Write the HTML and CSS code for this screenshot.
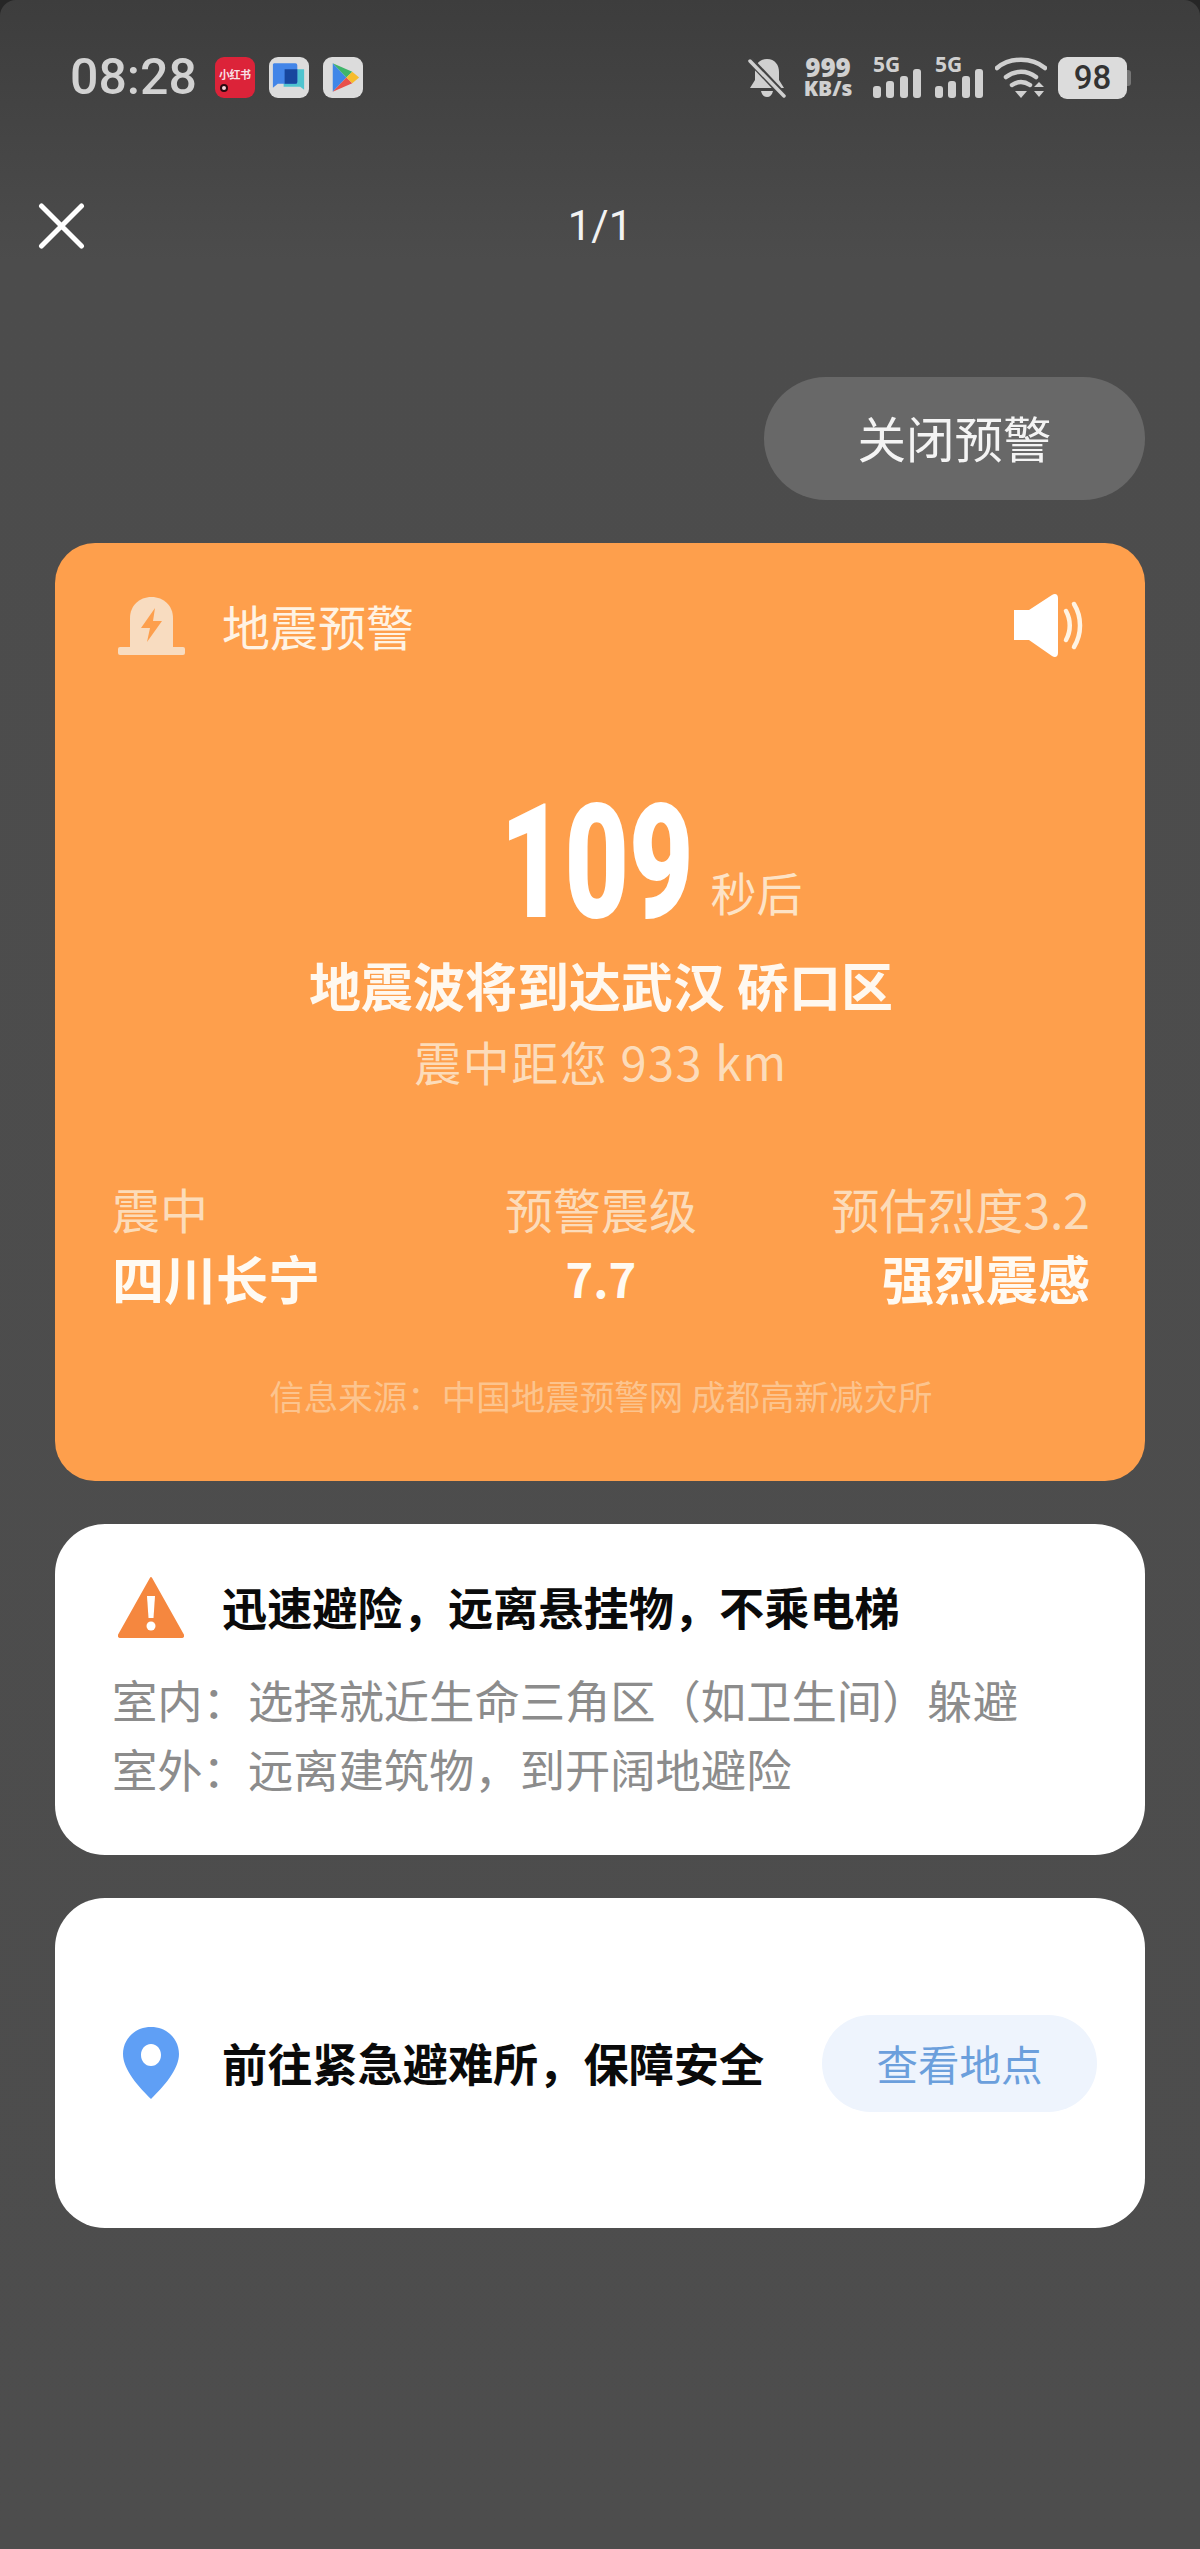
FILE: index.html
```html
<!DOCTYPE html>
<html lang="zh-CN">
<head>
<meta charset="utf-8">
<title>地震预警</title>
<link rel="stylesheet" href="styles.css">
</head>
<body>
<div class="page">
  <div class="status">
    <span class="time">08:28</span>
    <span class="tile tile-red">小红书<i class="tile-dot"></i></span>
    <span class="tile tile-light">
      <svg class="tile-svg" viewBox="0 0 41 41"><path d="M15 12h21v21l-4-3H15z" fill="#4fc4cf"/><path d="M5 6h22a2 2 0 0 1 2 2v17a2 2 0 0 1-2 2H9l-5 4V7z" fill="#4285e8"/><path d="M16 12h13v13a2 2 0 0 1-2 2H16z" fill="#17479e"/></svg>
    </span>
    <span class="tile tile-light tile-play">
      <svg class="tile-svg" viewBox="0 0 41 41"><path d="M10 6v29l14-14.500z" fill="#3f86e8"/><path d="M10 6l14 14.500 6-6z" fill="#3fb56a"/><path d="M10 35l14-14.500 6 6z" fill="#e8504a"/><path d="M24 20.500l6-6 7 6-7 6z" fill="#f7bc2d"/></svg>
    </span>
    <span class="status-right">
      <svg class="bell" viewBox="0 0 38 40"><path d="M19 1c8 0 12 6 12 13v8l5 8H2l5-8v-8C7 7 11 1 19 1zM13 33h12c-1 4-3 6-6 6s-5-2-6-6z" fill="#d0d0d0"/><path d="M2 2l34 36" stroke="#444" stroke-width="7"/><path d="M2 3l34 35" stroke="#d0d0d0" stroke-width="3.500" stroke-linecap="round"/></svg>
      <span class="speed"><b>999</b><b>KB/s</b></span>
      <span class="signal"><b>5G</b><svg class="bars" viewBox="0 0 48 29"><rect x="0" y="17" width="8" height="12" rx="3"/><rect x="13" y="12" width="8" height="17" rx="3"/><rect x="27" y="7" width="8" height="22" rx="3"/><rect x="40" y="0" width="8" height="29" rx="3"/></svg></span>
      <span class="signal"><b>5G</b><svg class="bars" viewBox="0 0 48 29"><rect x="0" y="17" width="8" height="12" rx="3"/><rect x="13" y="12" width="8" height="17" rx="3"/><rect x="27" y="7" width="8" height="22" rx="3"/><rect x="40" y="0" width="8" height="29" rx="3"/></svg></span>
      <svg class="wifi" viewBox="0 0 52 42"><g fill="none" stroke="#d0d0d0" stroke-width="4.500" stroke-linecap="round"><path d="M2 11C15 0 37 0 50 11"/><path d="M11 20c9-7 21-7 30 0"/><path d="M17 28c6-4 12-4 18 0"/></g><path d="M20 34h12l-6 7z" fill="#d0d0d0"/><path d="M39 30l5-5 5 5zM39 34h10l-5 6z" fill="#d0d0d0"/></svg>
      <span class="battery">98</span>
    </span>
  </div>

  <div class="nav">
    <svg class="close" viewBox="0 0 46 46"><path d="M3 3l40 40M43 3L3 43" stroke="#fff" stroke-width="5" stroke-linecap="round"/></svg>
    <span class="pager">1/1</span>
    <span></span>
  </div>

  <div class="action"><span class="dismiss">关闭预警</span></div>

  <section class="card card-alert">
    <div class="alert-head">
      <svg class="alarm" viewBox="0 0 67 58"><path d="M12 50V21C12 9 21 0 33.500 0S55 9 55 21v29z" fill="#f8dcc0"/><rect x="0" y="50" width="67" height="8" rx="2" fill="#f8dcc0"/><path d="M37 11L23 31h9l-3 14 15-21h-9z" fill="#fd9f4d"/></svg>
      <span class="alert-title">地震预警</span>
      <svg class="speaker" viewBox="0 0 72 65"><path d="M2 17h15L40 2c3-2 6-1 6 3v55c0 4-3 5-6 3L17 47H2z" fill="#fff"/><path d="M54 18c5 9 5 20 0 29M62 11c8 13 8 30 0 43" fill="none" stroke="#fff3e3" stroke-width="4.500" stroke-linecap="round"/></svg>
    </div>

    <div class="count">
      <span></span>
      <span class="count-box"><span class="count-num">109</span></span>
      <span class="count-unit">秒后</span>
    </div>
    <div class="headline">地震波将到达武汉 硚口区</div>
    <div class="distance">震中距您 933 km</div>

    <div class="facts">
      <div class="fact"><span class="fact-label">震中</span><span class="fact-value">四川长宁</span></div>
      <div class="fact fact-mid"><span class="fact-label">预警震级</span><span class="fact-value fact-num">7.7</span></div>
      <div class="fact fact-end"><span class="fact-label">预估烈度3.2</span><span class="fact-value">强烈震感</span></div>
    </div>
    <div class="source">信息来源：中国地震预警网 成都高新减灾所</div>
  </section>

  <section class="card card-tips">
    <div class="tips-head">
      <svg class="warn" viewBox="0 0 66 62"><path d="M33 2L65 59c.5 1 0 2-1 2H2c-1 0-1.500-1-1-2z" fill="#f5873f" stroke="#f5873f" stroke-width="2" stroke-linejoin="round"/><path d="M29 20h8l-1.500 22h-5z" fill="#fff"/><circle cx="33" cy="50" r="4.500" fill="#fff"/></svg>
      <span class="strong-text">迅速避险，远离悬挂物，不乘电梯</span>
    </div>
    <p class="tip-line">室内：选择就近生命三角区（如卫生间）躲避</p>
    <p class="tip-line">室外：远离建筑物，到开阔地避险</p>
  </section>

  <section class="card card-shelter">
    <svg class="pin" viewBox="0 0 56 72"><path fill-rule="evenodd" d="M28 0c16 0 28 12 28 27 0 16-16 33-28 45C16 60 0 43 0 27 0 12 12 0 28 0zm0 17c-6 0-10 5-10 11s4 11 10 11 10-5 10-11-4-11-10-11z" fill="#5f9ff5"/></svg>
    <span class="strong-text">前往紧急避难所，保障安全</span>
    <span class="view-btn">查看地点</span>
  </section>
</div>
</body>
</html>
```

FILE: styles.css
```css
* { box-sizing: border-box; }
html, body { margin: 0; padding: 0; background: #262626; }
body { font-family: "Noto Sans CJK SC", "Noto Sans", sans-serif; }

.page {
  width: 1200px;
  height: 2549px;
  padding: 0 55px;
  overflow: hidden;
  border-radius: 16px 16px 0 0;
  background: linear-gradient(#3d3d3d 0, #4c4c4c 260px, #4d4d4d 100%);
}

/* Status bar */
.status {
  display: flex;
  align-items: center;
  height: 41px;
  margin: 57px -55px 0;
  padding: 0 73px 0 70px;
  color: #d0d0d0;
}
.time {
  margin-right: 18px;
  font: 500 50px/41px Roboto, sans-serif;
  color: #d2d2d2;
}
.tile {
  position: relative;
  display: flex;
  align-items: center;
  justify-content: center;
  width: 40px;
  height: 41px;
  margin-right: 14px;
  border-radius: 9px;
}
.tile-red {
  padding-bottom: 7px;
  background: #dc2339;
  color: #f8dfe2;
  font-size: 11px;
  font-weight: 700;
  line-height: 12px;
  white-space: nowrap;
  letter-spacing: -.5px;
}
.tile-dot {
  position: absolute;
  left: 5px;
  bottom: 6px;
  width: 8px;
  height: 8px;
  border: 2px solid #2a0a10;
  border-radius: 50%;
  background: #f6d6da;
}
.tile-light { background: #dcdcdc; }
.tile-svg { display: block; width: 40px; height: 41px; }
.status-right {
  display: flex;
  align-items: center;
  margin-left: auto;
}
.bell { width: 38px; height: 40px; margin-right: 17px; }
.speed {
  display: flex;
  flex-direction: column;
  align-items: center;
  margin-right: 20px;
  width: 50px;
  font: 700 21px/21px "Noto Sans", sans-serif;
  color: #d0d0d0;
}
.speed b:first-child { font-size: 26px; }
.signal {
  display: flex;
  flex-direction: column;
  width: 48px;
  height: 41px;
  margin-right: 14px;
}
.signal b {
  height: 12px;
  font: 700 21px/14px "Noto Sans", sans-serif;
  color: #d0d0d0;
}
.bars { display: block; width: 48px; height: 29px; fill: #d0d0d0; }
.wifi { width: 52px; height: 42px; margin: 0 11px 0 -2px; }
.battery {
  position: relative;
  width: 69px;
  height: 42px;
  border-radius: 9px;
  background: #dcdcdc;
  color: #333;
  font: 500 33px/42px Roboto, sans-serif;
  text-align: center;
}
.battery::after {
  content: "";
  position: absolute;
  top: 13px;
  right: -4px;
  width: 4px;
  height: 16px;
  border-radius: 0 3px 3px 0;
  background: #777;
}

/* Top nav */
.nav {
  display: grid;
  grid-template-columns: 1fr auto 1fr;
  align-items: center;
  height: 46px;
  margin: 105px -17px 0;
}
.close { display: block; width: 47px; height: 46px; }
.pager {
  font: 400 42px/46px Roboto, sans-serif;
  color: #f2f2f2;
}

.action {
  display: flex;
  justify-content: flex-end;
  margin-top: 128px;
}
.dismiss {
  width: 381px;
  height: 123px;
  padding-bottom: 3px;
  border-radius: 62px;
  background: #686868;
  color: #f4f4f4;
  font-size: 48.500px;
  line-height: 120px;
  text-align: center;
}

/* Cards */
.card { width: 1090px; }
.card-alert {
  height: 938px;
  margin-top: 43px;
  padding: 50px 55px 0 57px;
  border-radius: 40px;
  background: #fe9f4c;
}
.alert-head {
  display: flex;
  align-items: center;
  height: 65px;
  padding: 0 5px 0 6px;
}
.alarm { width: 67px; height: 58px; margin-right: 37px; }
.alert-title {
  color: #fff3e3;
  font-size: 48px;
  line-height: 65px;
}
.speaker { width: 74px; height: 65px; margin-left: auto; }

.count {
  display: grid;
  grid-template-columns: 1fr auto 1fr;
  align-items: start;
  height: 140px;
  margin-top: 135px;
}
.count-box {
  display: block;
  width: 187px;
  height: 140px;
}
.count-num {
  display: block;
  width: 187px;
  margin-left: -8px;
  font: 900 159px/140px Roboto, sans-serif;
  color: #fff;
  white-space: nowrap;
  transform: scaleX(.7);
  transform-origin: left center;
}
.count-unit {
  margin: 68px 0 0 16px;
  color: #fde3c6;
  font-size: 46px;
  line-height: 60px;
}
.headline {
  margin-top: 19px;
  color: #fff8ef;
  font-size: 52px;
  font-weight: 700;
  line-height: 66px;
  text-align: center;
}
.distance {
  margin-top: 10px;
  color: #fcdcba;
  font-size: 47px;
  letter-spacing: 1.500px;
  line-height: 66px;
  text-align: center;
}

.facts {
  display: grid;
  grid-template-columns: 1fr auto 1fr;
  margin-top: 82px;
}
.fact { display: flex; flex-direction: column; }
.fact-mid { align-items: center; }
.fact-end { align-items: flex-end; }
.fact-label {
  color: #fcdcba;
  font-size: 48px;
  line-height: 64px;
}
.fact-value {
  margin-top: 5px;
  color: #fffaf2;
  font-size: 52px;
  font-weight: 700;
  line-height: 66px;
}
.fact-num { font-size: 47px; }
.source {
  margin-top: 59px;
  color: #fcc48e;
  font-size: 34.500px;
  line-height: 50px;
  text-align: center;
}

.card-tips {
  height: 331px;
  margin-top: 43px;
  padding: 52px 56px 0 57px;
  border-radius: 50px;
  background: #fff;
}
.tips-head {
  display: flex;
  align-items: center;
  height: 62px;
  padding-left: 6px;
  margin-bottom: 27px;
}
.warn { width: 66px; height: 62px; margin-right: 38px; }
.strong-text {
  color: #0a0a0a;
  font-size: 45.200px;
  font-weight: 700;
  line-height: 62px;
}
.tip-line {
  margin: 0;
  color: #8c8c8c;
  font-size: 45.300px;
  line-height: 69px;
}

.card-shelter {
  display: flex;
  align-items: center;
  height: 330px;
  margin-top: 43px;
  padding: 0 48px 0 68px;
  border-radius: 50px;
  background: #fff;
}
.pin { width: 56px; height: 72px; margin-right: 43px; }
.view-btn {
  width: 275px;
  height: 97px;
  margin-left: auto;
  border-radius: 49px;
  background: #eef4fd;
  color: #6b9fdc;
  font-size: 41.500px;
  line-height: 97px;
  text-align: center;
}
```
